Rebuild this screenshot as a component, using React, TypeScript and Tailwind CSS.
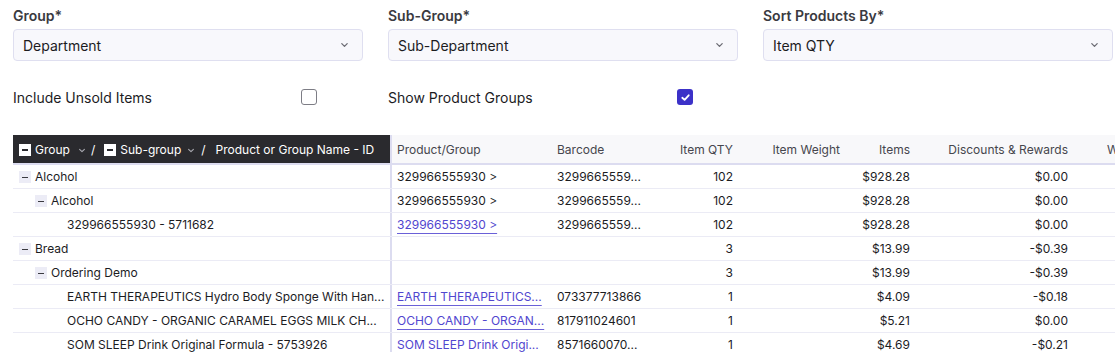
import React from "react";

type Row = {
  level: number;
  name: string;
  group?: boolean;
  product?: string;
  link?: boolean;
  barcode?: string;
  qty: string;
  items: string;
  disc: string;
};

const rows: Row[] = [
  { level: 0, name: "Alcohol", group: true, product: "329966555930 >", barcode: "3299665559...", qty: "102", items: "$928.28", disc: "$0.00" },
  { level: 1, name: "Alcohol", group: true, product: "329966555930 >", barcode: "3299665559...", qty: "102", items: "$928.28", disc: "$0.00" },
  { level: 2, name: "329966555930 - 5711682", product: "329966555930 >", link: true, barcode: "3299665559...", qty: "102", items: "$928.28", disc: "$0.00" },
  { level: 0, name: "Bread", group: true, qty: "3", items: "$13.99", disc: "-$0.39" },
  { level: 1, name: "Ordering Demo", group: true, qty: "3", items: "$13.99", disc: "-$0.39" },
  { level: 2, name: "EARTH THERAPEUTICS Hydro Body Sponge With Han...", product: "EARTH THERAPEUTICS...", link: true, barcode: "073377713866", qty: "1", items: "$4.09", disc: "-$0.18" },
  { level: 2, name: "OCHO CANDY - ORGANIC CARAMEL EGGS MILK CH...", product: "OCHO CANDY - ORGAN...", link: true, barcode: "817911024601", qty: "1", items: "$5.21", disc: "$0.00" },
  { level: 2, name: "SOM SLEEP Drink Original Formula - 5753926", product: "SOM SLEEP Drink Origi...", link: true, barcode: "8571660070...", qty: "1", items: "$4.69", disc: "-$0.21" },
];

function Chevron({ className }: { className?: string }) {
  return (
    <svg viewBox="0 0 10 6" className={className} fill="none" stroke="currentColor" strokeWidth="1.4" strokeLinecap="round" strokeLinejoin="round">
      <path d="M2 1.5 L5 4.5 L8 1.5" />
    </svg>
  );
}

function SelectBox({ label, value }: { label: string; value: string }) {
  return (
    <div className="flex flex-col">
      <label className="text-[14px] leading-5 font-semibold text-[#3a3a3f]">{label}</label>
      <div className="mt-[3px] h-8 flex items-center justify-between rounded-[4px] border border-[#dfdff0] bg-[#f8f8fc] pl-[9px] pr-[13px]">
        <span className="text-[14px] text-[#1c1c1f]">{value}</span>
        <Chevron className="w-[9px] h-[6px] text-[#6b6b73]" />
      </div>
    </div>
  );
}

function Check({ checked }: { checked?: boolean }) {
  if (checked) {
    return (
      <div className="w-4 h-4 rounded-[3px] bg-[#3c31c8] flex items-center justify-center">
        <svg viewBox="0 0 12 12" className="w-[11px] h-[11px]" fill="none" stroke="white" strokeWidth="2" strokeLinecap="round" strokeLinejoin="round">
          <path d="M2.5 6.3 L5 8.6 L9.5 3.6" />
        </svg>
      </div>
    );
  }
  return <div className="w-4 h-4 rounded-[3px] border border-[#7d7d85] bg-white" />;
}

function MinusBox({ dark }: { dark?: boolean }) {
  return (
    <span className={`w-3 h-3 flex items-center justify-center shrink-0 ${dark ? "bg-white" : "bg-[#ececf6]"}`}>
      <span className={`w-[6px] ${dark ? "h-[2px] bg-[#2a2a2e]" : "h-[1px] bg-[#3a3a40]"}`} />
    </span>
  );
}

export default function App() {
  return (
    <div className="w-[1115px] h-[352px] overflow-hidden bg-white pt-[6px] font-['Inter',sans-serif] text-[#1c1c1f]">
      <div className="px-[13px] grid grid-cols-[350px_350px_350px] gap-x-[25px]">
        <SelectBox label="Group*" value="Department" />
        <SelectBox label="Sub-Group*" value="Sub-Department" />
        <SelectBox label="Sort Products By*" value="Item QTY" />
      </div>

      <div className="mt-[24px] px-[13px] grid grid-cols-[350px_350px] gap-x-[25px]">
        <div className="flex items-center h-6">
          <span className="w-[288px] text-[14px] text-[#1c1c1f]">Include Unsold Items</span>
          <Check />
        </div>
        <div className="flex items-center h-6">
          <span className="w-[289px] text-[14px] text-[#1c1c1f]">Show Product Groups</span>
          <Check checked />
        </div>
      </div>

      <div className="ml-[13px] mt-[26px] overflow-hidden text-[12px] whitespace-nowrap">
        <div className="w-[1300px]">
          {/* header */}
          <div className="flex h-[30px] border-b-2 border-[#dcdcf0]">
            <div className="w-[377px] shrink-0 bg-[#2a2a2e] text-white flex items-center pl-[6px] pt-[2px]">
              <MinusBox dark />
              <span className="ml-1">Group</span>
              <Chevron className="ml-[8px] w-[8px] h-[5px] text-[#a8a8b0]" />
              <span className="ml-[5px]">/</span>
              <span className="ml-[9px]"><MinusBox dark /></span>
              <span className="ml-1">Sub-group</span>
              <Chevron className="ml-[6px] w-[8px] h-[5px] text-[#a8a8b0]" />
              <span className="ml-[6px]">/</span>
              <span className="ml-[10px]">Product or Group Name - ID</span>
            </div>
            <div className="w-[2px] shrink-0 bg-[#dcdcf0]" />
            <div className="flex bg-[#f8f8fa] text-[#46464d] items-center pt-[2px]">
              <div className="w-[159px] pl-[5px]">Product/Group</div>
              <div className="w-[100px] pl-[6px]">Barcode</div>
              <div className="w-[90px] pr-2 text-right">Item QTY</div>
              <div className="w-[107px] pr-2 text-right">Item Weight</div>
              <div className="w-[70px] pr-2 text-right">Items</div>
              <div className="w-[158px] pr-2 text-right">Discounts &amp; Rewards</div>
              <div className="w-[131px] pl-[31px]">Wholesale Cost</div>
            </div>
          </div>

          {rows.map((r, i) => (
            <div key={i} className="flex h-[24px] border-b border-[#ebebf5]">
              <div className="w-[377px] shrink-0 flex items-center pl-[6px] pt-[1px]">
                <span style={{ width: r.level * 16 }} className="shrink-0" />
                {r.group ? <MinusBox /> : <span className="w-3 shrink-0" />}
                <span className="ml-1">{r.name}</span>
              </div>
              <div className="w-[2px] shrink-0 bg-[#dcdcf0]" />
              <div className="flex items-center pt-[1px]">
                <div className="w-[159px] pl-[5px] pr-[6px]">
                  {r.product && (
                    <span className={r.link ? "text-[#5146cf] underline underline-offset-[4px] decoration-[#6a60d8]" : ""}>{r.product}</span>
                  )}
                </div>
                <div className="w-[100px] pl-[6px]">{r.barcode}</div>
                <div className="w-[90px] pr-2 text-right">{r.qty}</div>
                <div className="w-[107px] pr-2 text-right" />
                <div className="w-[70px] pr-2 text-right">{r.items}</div>
                <div className="w-[158px] pr-2 text-right">{r.disc}</div>
                <div className="w-[131px] pr-2 text-right">$0.00</div>
              </div>
            </div>
          ))}
        </div>
      </div>
    </div>
  );
}
